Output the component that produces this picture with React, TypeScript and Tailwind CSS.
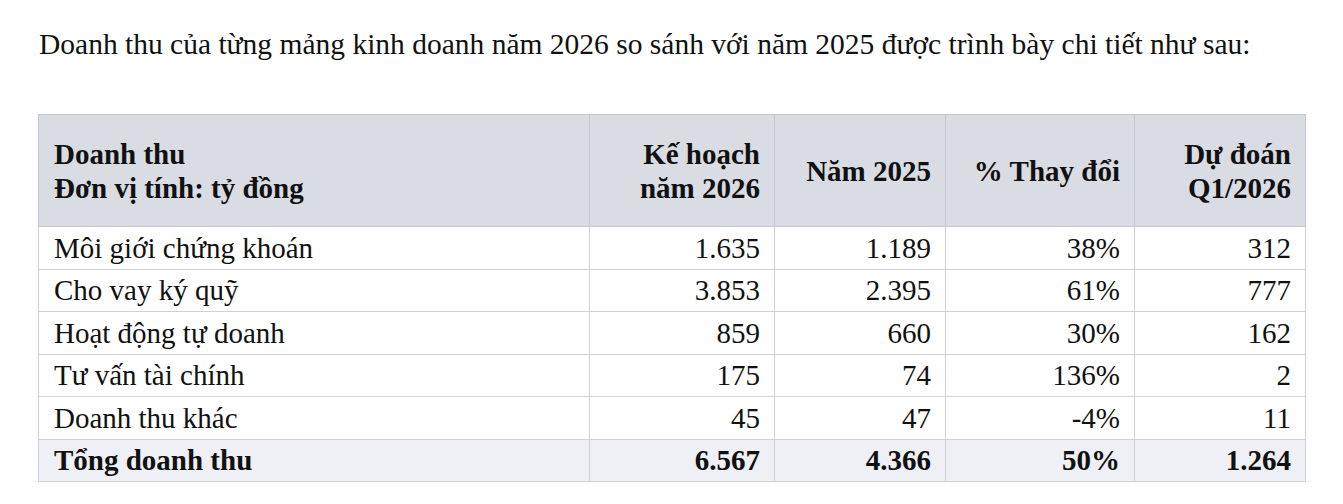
import React from "react";

const rows = [
  ["Môi giới chứng khoán", "1.635", "1.189", "38%", "312"],
  ["Cho vay ký quỹ", "3.853", "2.395", "61%", "777"],
  ["Hoạt động tự doanh", "859", "660", "30%", "162"],
  ["Tư vấn tài chính", "175", "74", "136%", "2"],
  ["Doanh thu khác", "45", "47", "-4%", "11"],
];

export default function App() {
  return (
    <div
      className="w-[1343px] h-[504px] bg-white text-[#111] overflow-hidden"
      style={{ fontFamily: '"Liberation Serif", "Times New Roman", serif' }}
    >
      <p className="pl-[39px] pt-[27px] text-[29.5px] leading-[34px] whitespace-nowrap">
        Doanh thu của từng mảng kinh doanh năm 2026 so sánh với năm 2025 được trình bày chi tiết như sau:
      </p>
      <div className="pl-[38px] pt-[53px]">
        <table className="border-collapse table-fixed w-[1267px]">
          <colgroup>
            <col className="w-[551px]" />
            <col className="w-[185px]" />
            <col className="w-[171px]" />
            <col className="w-[189px]" />
            <col className="w-[171px]" />
          </colgroup>
          <thead>
            <tr className="bg-[#dadce3] h-[112px] text-[29px] leading-[34px] font-bold">
              <th className="border border-[#c6c8d0] text-left align-middle pl-[15px] font-bold">
                Doanh thu
                <br />
                Đơn vị tính: tỷ đồng
              </th>
              <th className="border border-[#c6c8d0] text-right pr-[14px] font-bold">
                Kế hoạch
                <br />
                năm 2026
              </th>
              <th className="border border-[#c6c8d0] text-right pr-[14px] font-bold whitespace-nowrap">Năm 2025</th>
              <th className="border border-[#c6c8d0] text-right pr-[14px] font-bold whitespace-nowrap">% Thay đổi</th>
              <th className="border border-[#c6c8d0] text-right pr-[14px] font-bold">
                Dự đoán
                <br />
                Q1/2026
              </th>
            </tr>
          </thead>
          <tbody className="text-[29px] leading-[32px]">
            {rows.map((r) => (
              <tr key={r[0]} className="h-[42.5px]">
                <td className="border border-[#cfd1d8] pl-[15px] text-left">{r[0]}</td>
                <td className="border border-[#cfd1d8] pr-[14px] text-right">{r[1]}</td>
                <td className="border border-[#cfd1d8] pr-[14px] text-right">{r[2]}</td>
                <td className="border border-[#cfd1d8] pr-[14px] text-right">{r[3]}</td>
                <td className="border border-[#cfd1d8] pr-[14px] text-right">{r[4]}</td>
              </tr>
            ))}
            <tr className="h-[42.5px] bg-[#eef0f5] font-bold">
              <td className="border border-[#cfd1d8] pl-[15px] text-left">Tổng doanh thu</td>
              <td className="border border-[#cfd1d8] pr-[14px] text-right">6.567</td>
              <td className="border border-[#cfd1d8] pr-[14px] text-right">4.366</td>
              <td className="border border-[#cfd1d8] pr-[14px] text-right">50%</td>
              <td className="border border-[#cfd1d8] pr-[14px] text-right">1.264</td>
            </tr>
          </tbody>
        </table>
      </div>
    </div>
  );
}
